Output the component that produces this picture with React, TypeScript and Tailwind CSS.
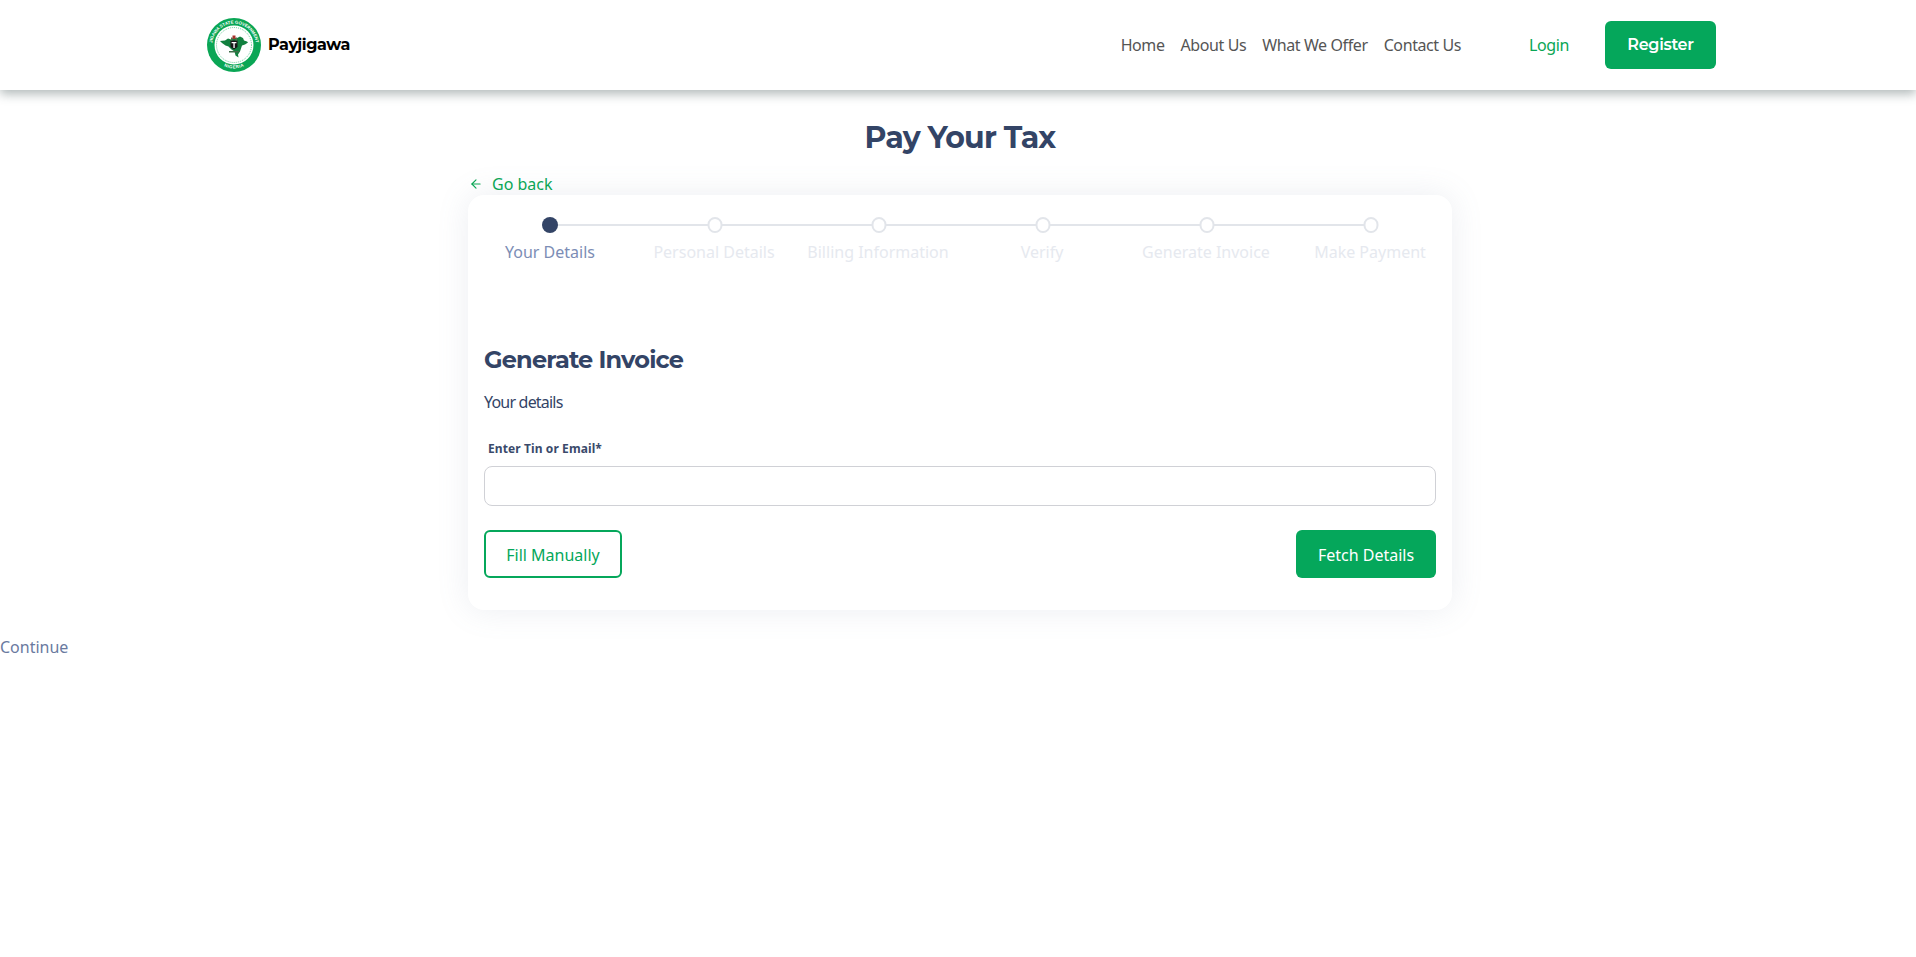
import * as React from "react";
import { ArrowLeft } from "lucide-react";

const steps = [
  "Your Details",
  "Personal Details",
  "Billing Information",
  "Verify",
  "Generate Invoice",
  "Make Payment",
];

const heading = "font-['Montserrat','Inter',sans-serif]";

const Logo: React.FC = () => (
  <svg width="54" height="54" viewBox="0 0 54 54" className="shrink-0">
    <circle cx="27" cy="27" r="27" fill="#0aa655" />
    <circle cx="27" cy="27" r="19.5" fill="#ffffff" />
    <circle cx="27" cy="27" r="17.5" fill="none" stroke="#0aa655" strokeWidth="0.6" strokeDasharray="1 1" />
    <defs>
      <path id="logo-top" d="M9.5 41a22 22 0 1 1 35 0" />
      <path id="logo-bottom" d="M10.5 38.5a20 20 0 0 0 33 0" />
    </defs>
    <text fill="#ffffff" fontSize="4.3" fontWeight="700" fontFamily="Liberation Sans, sans-serif">
      <textPath href="#logo-top" startOffset="50%" textAnchor="middle">
        JIGAWA STATE GOVERNMENT
      </textPath>
    </text>
    <text fill="#ffffff" fontSize="4.3" fontWeight="700" fontFamily="Liberation Sans, sans-serif">
      <textPath href="#logo-bottom" startOffset="50%" textAnchor="middle" dominantBaseline="hanging">
        NIGERIA
      </textPath>
    </text>
    <path
      d="M13 23l5-.5 3-2 3 1 2-1.500 4 0 3-1.500 3 1.500 1 2.500 3 1 1 1-3 2-3 1-1 3-1 3-2 3 .5 3-3-2-1-4-3-2-3-3-3-1-3.500-2.500z"
      fill="#12803f"
    />
    <path d="M23.500 22.500h7v6.500l-3.500 2.500-3.500-2.500z" fill="#161616" />
    <path d="M25.500 17.500h3v3.500h-3z" fill="#a8322d" />
    <path d="M24 19.500h1.500v3H24zM28.500 19.500H30v3h-1.500z" fill="#5a6a4a" />
    <path d="M26.400 24h1.300v6h-1.300zM24.600 24h4.800v1.200h-4.800z" fill="#ffffff" />
    <path d="M22 33h10v1.500H22z" fill="#3f6d48" />
  </svg>
);

const Stepper: React.FC = () => (
  <div className="flex pt-[22px]">
    {steps.map((step, i) => (
      <div key={step} className="relative flex w-[164px] flex-col items-center">
        {i > 0 && (
          <div className="absolute left-[-82px] right-[82px] top-[7px] z-0 h-0.5 bg-[#e2e5ea]" />
        )}
        {i === 0 ? (
          <div className="relative z-10 h-4 w-4 rounded-full bg-[#334466]" />
        ) : (
          <div className="relative z-10 h-4 w-[15px] translate-x-[0.5px] rounded-full border-2 border-[#e2e5ea] bg-white" />
        )}
        <span
          className={
            i === 0
              ? "mt-[7px] text-base leading-6 text-[#7c8db5]"
              : "mt-[7px] text-base leading-6 text-[#e6e9ef]"
          }
        >
          {step}
        </span>
      </div>
    ))}
  </div>
);

export default function App() {
  return (
    <div className="min-h-[957px] bg-white font-['Noto_Sans',sans-serif]">
      <header className="flex h-[90px] items-center justify-between bg-white pl-[207px] pr-[200px] shadow-[0_4px_10px_rgba(60,80,80,0.4)]">
        <div className="flex items-center gap-[7px]">
          <Logo />
          <span className={`${heading} text-base font-bold tracking-[-0.4px] text-black`}>Payjigawa</span>
        </div>
        <nav className="flex items-center text-base text-[#555555]">
          <a className="tracking-[-0.4px]">Home</a>
          <a className="ml-4 tracking-[-0.4px]">About Us</a>
          <a className="ml-4 tracking-[-0.4px]">What We Offer</a>
          <a className="ml-4 tracking-[-0.4px]">Contact Us</a>
          <a className="ml-[68px] tracking-[-0.4px] text-[#0aa655]">Login</a>
          <button className={`${heading} ml-9 h-12 w-[111px] rounded-md bg-[#05a75b] text-base font-semibold tracking-[-0.3px] text-white`}>
            Register
          </button>
        </nav>
      </header>

      <h1 className={`${heading} mt-[30px] pl-1 text-center text-[30px] font-bold leading-9 tracking-[-0.8px] text-[#334466]`}>
        Pay Your Tax
      </h1>

      <div className="mx-auto mt-4 w-[984px] translate-x-[2px]">
        <a className="flex h-[23px] items-center text-base text-[#0aa655]">
          <ArrowLeft size={14} className="ml-px mr-[9px]" />
          Go back
        </a>
        <section className="rounded-2xl bg-white shadow-[0_0_32px_rgba(120,135,165,0.14)]">
          <Stepper />
          <div className="px-4 pb-8 pt-[80px]">
            <h2 className={`${heading} text-2xl font-bold leading-8 tracking-[-0.8px] text-[#334466]`}>
              Generate Invoice
            </h2>
            <p className="mt-[14px] text-base leading-6 tracking-[-0.8px] text-[#334466]">
              Your details
            </p>
            <label className="mt-[26px] block pl-1 text-xs font-bold leading-[18px] tracking-[0.1px] text-[#3a4a6b]">
              Enter Tin or Email*
            </label>
            <input className="mt-2 block h-10 w-full rounded-lg border border-[#d0d1d6] bg-white outline-none" />
            <div className="mt-6 flex justify-between">
              <button className="h-12 w-[138px] rounded-md border-2 border-[#05a75b] bg-white pt-px text-base text-[#05a75b]">
                Fill Manually
              </button>
              <button className="h-12 w-[140px] rounded-md bg-[#05a75b] pt-px text-base text-white">
                Fetch Details
              </button>
            </div>
          </div>
        </section>
      </div>

      <p className="mt-[25px] text-base leading-6 text-[#6a7a9f]">Continue</p>
    </div>
  );
}
